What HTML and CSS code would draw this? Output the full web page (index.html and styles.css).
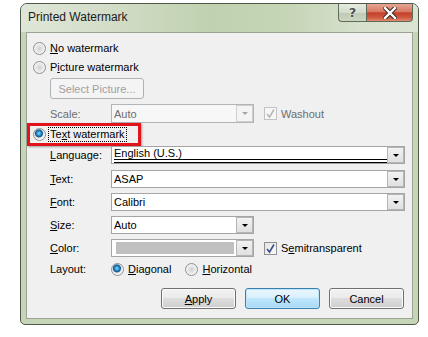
FILE: index.html
```html
<!DOCTYPE html>
<html lang="en">
<head>
    <meta charset="UTF-8">
    <title>Printed Watermark</title>
    <link rel="stylesheet" href="styles.css">
</head>
<body>
    <div class="window">
        <div class="titlebar">
            <span class="title">Printed Watermark</span>
            <div class="caption-buttons">
                <span class="cap-btn help">?</span>
                <span class="cap-btn close">
                    <svg width="14" height="12" viewBox="0 0 14 12">
                        <path d="M2 1 L12 11 M12 1 L2 11" stroke="#3a2a26" stroke-width="4.4" stroke-linecap="square"/>
                        <path d="M2 1 L12 11 M12 1 L2 11" stroke="#fff" stroke-width="2.4" stroke-linecap="square"/>
                    </svg>
                </span>
            </div>
        </div>
        <div class="frame">
            <div class="panel">
                <div class="opt-row">
                    <span class="radio"></span>
                    <span><u>N</u>o watermark</span>
                </div>
                <div class="opt-row gap3">
                    <span class="radio"></span>
                    <span>P<u>i</u>cture watermark</span>
                </div>
                <div class="indent gap3">
                    <span class="btn disabled">Select Picture...</span>
                </div>
                <div class="field-row scale-row">
                    <span class="label muted">Scale:</span>
                    <div class="combo short disabled">
                        <span class="value">Auto</span>
                        <span class="arrow"><i></i></span>
                    </div>
                    <span class="check disabled"><svg width="11" height="11" viewBox="0 0 11 11"><path d="M2 6 L4.5 9 L9 1.5" fill="none" stroke="#b8b8b8" stroke-width="1.6"/></svg></span>
                    <span class="muted">Washout</span>
                </div>
                <div class="highlight">
                    <span class="radio checked"></span>
                    <span class="focus">Te<u>x</u>t watermark</span>
                </div>
                <div class="field-row lang-row">
                    <span class="label"><u>L</u>anguage:</span>
                    <div class="combo long lang">
                        <span class="value"><span class="lines">English (U.S.)</span></span>
                        <span class="arrow"><i></i></span>
                    </div>
                </div>
                <div class="field-row gap6">
                    <span class="label"><u>T</u>ext:</span>
                    <div class="combo long">
                        <span class="value">ASAP</span>
                        <span class="arrow"><i></i></span>
                    </div>
                </div>
                <div class="field-row gap5">
                    <span class="label"><u>F</u>ont:</span>
                    <div class="combo long">
                        <span class="value">Calibri</span>
                        <span class="arrow"><i></i></span>
                    </div>
                </div>
                <div class="field-row gap5">
                    <span class="label"><u>S</u>ize:</span>
                    <div class="combo short">
                        <span class="value">Auto</span>
                        <span class="arrow"><i></i></span>
                    </div>
                </div>
                <div class="field-row gap5">
                    <span class="label"><u>C</u>olor:</span>
                    <div class="combo short">
                        <span class="value"><span class="swatch"></span></span>
                        <span class="arrow"><i></i></span>
                    </div>
                    <span class="check"><svg width="11" height="11" viewBox="0 0 11 11"><path d="M2 6 L4.5 9 L9 1.5" fill="none" stroke="#3b4f8c" stroke-width="1.6"/></svg></span>
                    <span>S<u>e</u>mitransparent</span>
                </div>
                <div class="field-row layout-row">
                    <span class="label">Layout:</span>
                    <span class="radio checked"></span>
                    <span class="radio-text"><u>D</u>iagonal</span>
                    <span class="radio second"></span>
                    <span class="radio-text"><u>H</u>orizontal</span>
                </div>
                <div class="buttons">
                    <span class="btn"><u>A</u>pply</span>
                    <span class="btn default">OK</span>
                    <span class="btn">Cancel</span>
                </div>
            </div>
        </div>
    </div>
</body>
</html>
```

FILE: styles.css
```css
body {
    margin: 0;
    background: #fff;
    font-family: "Liberation Sans", Arial, sans-serif;
    font-size: 11px;
    color: #000;
}

.window {
    margin: 3px 0 0 20px;
    width: 397px;
    height: 320px;
    border: 1px solid #4f594b;
    border-radius: 7px 7px 5px 5px;
    background: #c6d5b7;
    display: flex;
    flex-direction: column;
    overflow: hidden;
}

.titlebar {
    height: 28px;
    display: flex;
    align-items: flex-start;
    padding-left: 7px;
    background: linear-gradient(to right, #dfe6d8 0%, #d3ddc8 22%, #bfd1ae 48%, #c6d6b6 68%, #d6e0cc 85%, #dbe3d3 100%);
}

.title {
    font-size: 12px;
    line-height: 27px;
    color: #1b1b1b;
}

.caption-buttons {
    margin-left: auto;
    margin-right: 5px;
    display: flex;
}

.cap-btn {
    height: 17px;
    border: 1px solid #5f6b5a;
    border-top: none;
    display: flex;
    align-items: center;
    justify-content: center;
}

.help {
    width: 27px;
    border-right: none;
    border-radius: 0 0 0 4px;
    background: linear-gradient(#e6ebe1, #d3dccb 50%, #bfcab6 51%, #cbd6c2);
    font-family: "DejaVu Sans", sans-serif;
    font-weight: bold;
    font-size: 13px;
    color: #4a4f55;
    text-shadow: 0 0 2px #fff, 0 0 1px #fff;
}

.close {
    width: 45px;
    border-radius: 0 0 4px 0;
    background: linear-gradient(#e6a593, #d67a63 45%, #c5412a 52%, #cf5a40 80%, #e08a70);
}

.frame {
    flex: 1;
    display: flex;
    padding: 0 5px 5px;
}

.panel {
    flex: 1;
    border: 1px solid #99a494;
    background: #f0f0f0;
    padding-top: 7px;
    display: flex;
    flex-direction: column;
}

.opt-row {
    height: 16px;
    display: flex;
    align-items: center;
    gap: 4px;
    padding-left: 6px;
}

.gap3 { margin-top: 3px; }
.gap5 { margin-top: 5px; }
.gap6 { margin-top: 6px; }

.radio {
    width: 11px;
    height: 11px;
    border: 1px solid #8f9093;
    border-radius: 50%;
    background: radial-gradient(circle at 50% 50%, #cfd0d2 0, #e4e5e6 3px, #f6f6f6 6px);
    flex: none;
}

.radio.checked {
    background: radial-gradient(circle at 45% 40%, #8fdcff 0, #2c95d3 2px, #11558e 3.5px, #e2e3e4 4.5px, #f6f6f6 6px);
}

.indent {
    padding-left: 23px;
    display: flex;
}

.btn {
    width: 73px;
    height: 19px;
    border: 1px solid #707070;
    border-radius: 3px;
    background: linear-gradient(#f2f2f2, #ebebeb 45%, #dddddd 50%, #cfcfcf);
    display: flex;
    align-items: center;
    justify-content: center;
    box-shadow: inset 0 0 0 1px #fbfbfb;
}

.btn.disabled {
    width: 92px;
    border-color: #adb2b5;
    background: #f4f4f4;
    color: #a0a0a0;
    box-shadow: none;
}

.field-row {
    display: flex;
    align-items: center;
    padding-left: 23px;
    height: 18px;
}

.scale-row {
    margin-top: 5px;
    height: 19px;
}

.label {
    width: 61px;
    flex: none;
}

.muted { color: #6d6d6d; }

.combo {
    height: 16px;
    border: 1px solid #a5a5a5;
    background: #fff;
    display: flex;
    align-items: stretch;
    padding: 0 0 0 1px;
    flex: none;
}

.scale-row .combo { height: 17px; }

.combo.long { width: 291px; }
.combo.short { width: 140px; }

.combo .value {
    flex: 1;
    display: flex;
    align-items: center;
    padding-left: 1px;
}

.combo .arrow {
    width: 15px;
    border: 1px solid #b5b5b5;
    background: linear-gradient(#f2f2f2, #e0e0e0);
    display: flex;
    align-items: center;
    justify-content: center;
    margin: 0;
}

.combo .arrow i {
    width: 0;
    height: 0;
    border-left: 3px solid transparent;
    border-right: 3px solid transparent;
    border-top: 3px solid #000;
}

.combo.disabled {
    background: #f7f7f7;
    border-color: #b4b4b4;
    color: #6d6d6d;
}

.combo.disabled .arrow {
    background: #f4f4f4;
    border-color: #cfcfcf;
}

.combo.disabled .arrow i { border-top-color: #a6a6a6; }

.lang .value {
    align-items: flex-start;
}

.lines {
    display: block;
    width: 100%;
    height: 12px;
    line-height: 13px;
    border-bottom: 4px double #000;
}

.swatch {
    display: block;
    width: 118px;
    height: 12px;
    margin-left: 2px;
    background: #c0c0c0;
}

.check {
    width: 11px;
    height: 11px;
    border: 1px solid #8f9093;
    background: linear-gradient(135deg, #e4e4e4, #fafafa);
    margin: 0 4px 0 10px;
    display: flex;
    align-items: center;
    justify-content: center;
    flex: none;
}

.check.disabled {
    border-color: #c2c2c2;
    background: #f7f7f7;
}

.highlight {
    width: 105px;
    height: 17px;
    border: 3px solid #e3131b;
    box-shadow: 1px 1px 2px rgba(0, 0, 0, 0.35);
    display: flex;
    align-items: center;
    gap: 3px;
    padding-left: 3px;
}

.focus {
    outline: 1px dotted #000;
    padding: 0 1px;
    line-height: 13px;
}

.lang-row { height: 18px; }
.lang-row .combo { height: 16px; }

.layout-row {
    margin-top: 4px;
    height: 16px;
}

.radio-text { margin-left: 4px; }
.radio.second { margin-left: 14px; }

.buttons {
    margin-top: 11px;
    display: flex;
    justify-content: flex-end;
    gap: 9px;
    padding-right: 8px;
}

.btn.default {
    border-color: #3c7fb1;
    box-shadow: inset 0 0 0 1px #bfe5f9;
    background: linear-gradient(#eaf6fd, #d9f0fc 45%, #bee6fd 50%, #a7d9f5);
}
```
